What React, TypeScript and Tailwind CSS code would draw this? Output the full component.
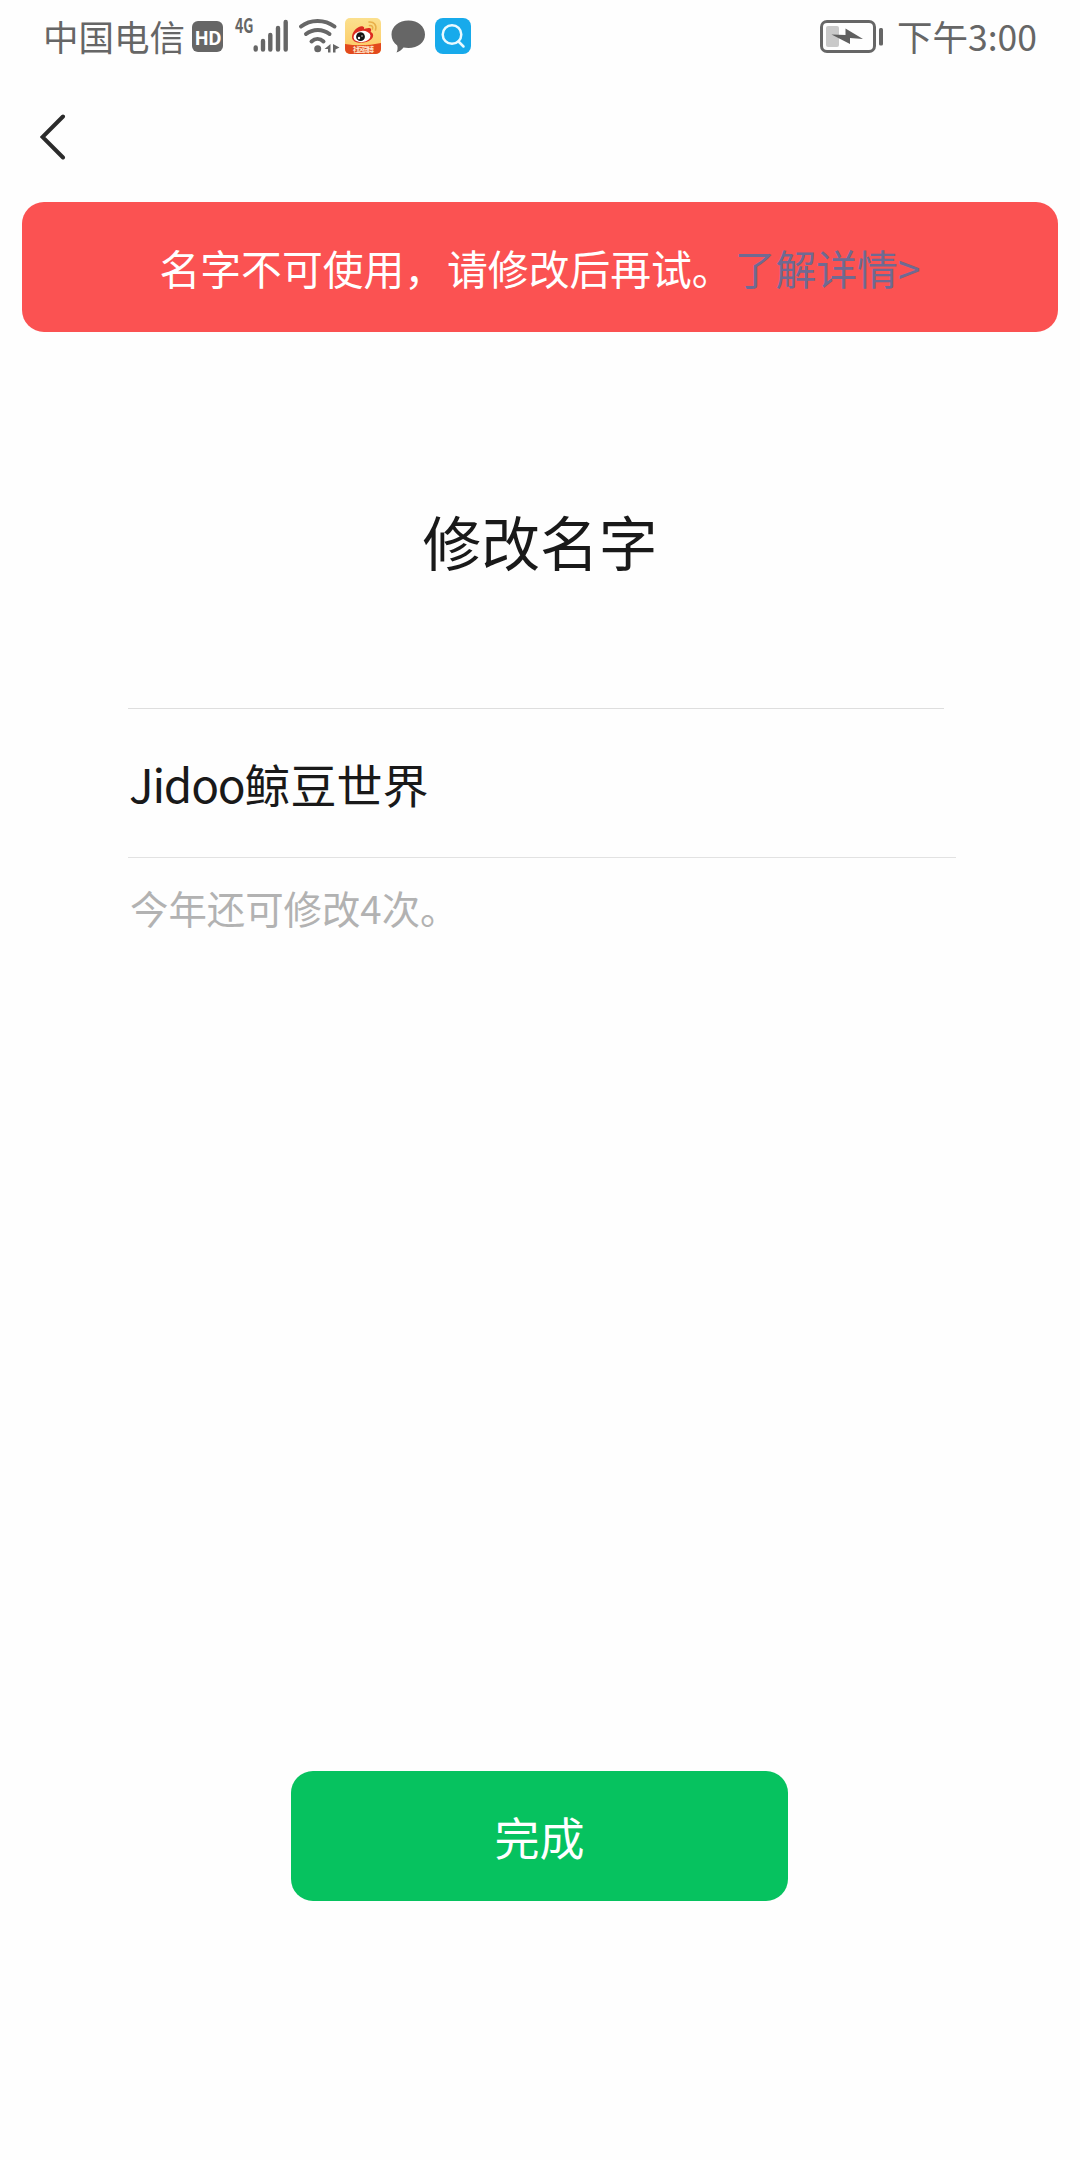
const font = "font-['Noto_Sans_CJK_SC','Noto_Sans',sans-serif]"

function Signal() {
  return (
    <svg width="58" height="40" viewBox="0 0 58 40" className="ml-[10px] overflow-visible">
      <text x="2" y="17" fontSize="20" fontWeight="700" fill="#666" textLength="18.500" lengthAdjust="spacingAndGlyphs">4G</text>
      <g stroke="#666" strokeWidth="4.400" strokeLinecap="round">
        <path d="M22.700 31.500v2M30 25v8.500M37.300 19v14.500M45 12v21.500M52.700 6v27.500" />
      </g>
    </svg>
  )
}

function Wifi() {
  return (
    <svg width="44" height="40" viewBox="0 0 44 40" className="ml-[5px]">
      <g fill="none" stroke="#666" strokeWidth="4" strokeLinecap="round">
        <path d="M5 10.500C14 3 29 3 38.500 10.500" />
        <path d="M10 18C17 12.500 26.500 12.500 33.500 18" />
        <path d="M15.500 25.500C19 22.300 24 22.300 27.500 25.500" />
      </g>
      <circle cx="21.700" cy="32.800" r="3.500" fill="#666" />
      <path d="M34.500 28v8.500H32v-3.500h-3.500zM37 28v8.500h2.500v-3l4-2z" fill="#666" />
    </svg>
  )
}

function Weibo() {
  return (
    <svg width="36" height="36" viewBox="0 0 36 36" className="ml-[5px]">
      <defs>
        <clipPath id="weibo">
          <rect width="36" height="36" rx="5" />
        </clipPath>
        <linearGradient id="weiboBg" x2="0" y2="1">
          <stop stopColor="#fbe08e" />
          <stop offset="1" stopColor="#fdc860" />
        </linearGradient>
      </defs>
      <g clipPath="url(#weibo)">
        <rect width="36" height="36" fill="url(#weiboBg)" />
        <path d="M0 26q18 3 36-1v11H0z" fill="#e2491d" />
        <path d="M7 19c0-6 7-12 11-10.500 2 1 1 2.500 1 2.500s6-2.500 7 0c.5 2-.5 3-.5 3 3.500 1 3.500 5 .5 7.500-6 5-19 4.500-19-2.500z" fill="#dc2b20" />
        <ellipse cx="17" cy="18.500" rx="8.500" ry="5.600" fill="#fff" transform="rotate(-6 17 18.500)" />
        <circle cx="15.500" cy="18.700" r="4.400" fill="#151515" />
        <circle cx="14" cy="20" r="1.200" fill="#fff" />
        <circle cx="17" cy="18" r=".7" fill="#fff" />
        <path d="M24 4c5-.5 8 3 6.500 8M24.500 7.500c2.500-.3 3.700 1.200 3 3.500" fill="none" stroke="#e8b04a" strokeWidth="1.600" strokeLinecap="round" />
        <text x="8" y="34" fontSize="6.500" fontWeight="700" fill="#ffe9cf" textLength="21">社区微博</text>
      </g>
    </svg>
  )
}

function Chat() {
  return (
    <svg width="36" height="36" viewBox="0 0 36 36" className="ml-[9px]">
      <path d="M18.500 2.500c9.500 0 16.500 6 16.500 14s-7 13.500-16.500 13.500c-1.800 0-3.500-.2-5-.5C11.500 32 9 34 6.500 34.500c1-2 1.500-4.500.7-7C3.500 25 1.500 21 1.500 16.500c0-8 7.500-14 17-14z" fill="#666" />
    </svg>
  )
}

function Search() {
  return (
    <svg width="36" height="36" viewBox="0 0 36 36" className="ml-[9px]">
      <rect width="36" height="36" rx="8" fill="#17aaeb" />
      <g fill="none" stroke="#eafaff" strokeWidth="2.500" strokeLinecap="round">
        <circle cx="17" cy="16.500" r="9.300" />
        <path d="M23.500 23.500l5 5" />
      </g>
    </svg>
  )
}

function Battery() {
  return (
    <svg width="64" height="34" viewBox="0 0 64 34">
      <rect x="1.500" y="2.500" width="53" height="30" rx="5.500" fill="none" stroke="#666" strokeWidth="3" />
      <rect x="6" y="7" width="13" height="21" rx="2" fill="#c9c9c9" />
      <path d="M11.500 15.500l14 .5V9.500L43 20l-13-1v6z" fill="#5f5f5f" />
      <rect x="59" y="9" width="4" height="17.500" rx="1.500" fill="#666" />
    </svg>
  )
}

export default function App() {
  return (
    <div className={`${font} flex h-[2160px] w-[1080px] flex-col bg-[#fefefe] text-[#191919]`}>
      <header className="flex h-[72px] items-center pr-[43px] pl-[43px] text-[35.500px] leading-none text-[#666]">
        <span className="w-[144px] whitespace-nowrap">中国电信</span>
        <span className="ml-[5px] flex h-[31px] w-[31px] items-center justify-center rounded-[6px] bg-[#666] text-[19px] font-bold tracking-[-1px] text-white">
          HD
        </span>
        <Signal />
        <Wifi />
        <Weibo />
        <Chat />
        <Search />
        <div className="ml-auto flex items-center gap-[13px]">
          <Battery />
          <span className="whitespace-nowrap">下午3:00</span>
        </div>
      </header>

      <nav className="flex h-[130px] pt-[41px] pl-[40px]">
        <button className="h-[48px]">
          <svg width="26" height="48" viewBox="0 0 26 48" fill="none" stroke="#2b2b2b" strokeWidth="4" strokeLinecap="round">
            <path d="M23 3.500L2.500 24 23 44.500" />
          </svg>
        </button>
      </nav>

      <div className="mx-[22px] flex h-[130px] items-center justify-center rounded-[22px] bg-[#fb5252] pt-[2px] text-[40.800px] whitespace-nowrap text-white">
        名字不可使用，<span className="ml-[2px]">请修改后再试。</span>
        <a className="ml-[2px] text-[#6f6a92]">了解详情&gt;</a>
      </div>

      <main className="flex flex-col">
        <h1 className="mt-[169px] text-center text-[58.800px] leading-[80px]">修改名字</h1>
        <div className="mt-[127px] ml-[128px] h-px w-[816px] bg-[#dedede]" />
        <p className="ml-[129px] flex h-[148px] items-center text-[46px] whitespace-nowrap">
          <span className="tracking-[-1.200px]">Jidoo</span>鲸豆世界
        </p>
        <div className="ml-[128px] h-px w-[828px] bg-[#e2e2e2]" />
        <p className="mt-[22px] ml-[130px] text-[38.400px] leading-[54px] text-[#b2b2b2]">今年还可修改4次。</p>
        <button className="mt-[837px] ml-[291px] flex h-[130px] w-[497px] items-center justify-center rounded-[22px] bg-[#06c25f] pt-[2px] text-[45px] text-white">
          完成
        </button>
      </main>
    </div>
  )
}
